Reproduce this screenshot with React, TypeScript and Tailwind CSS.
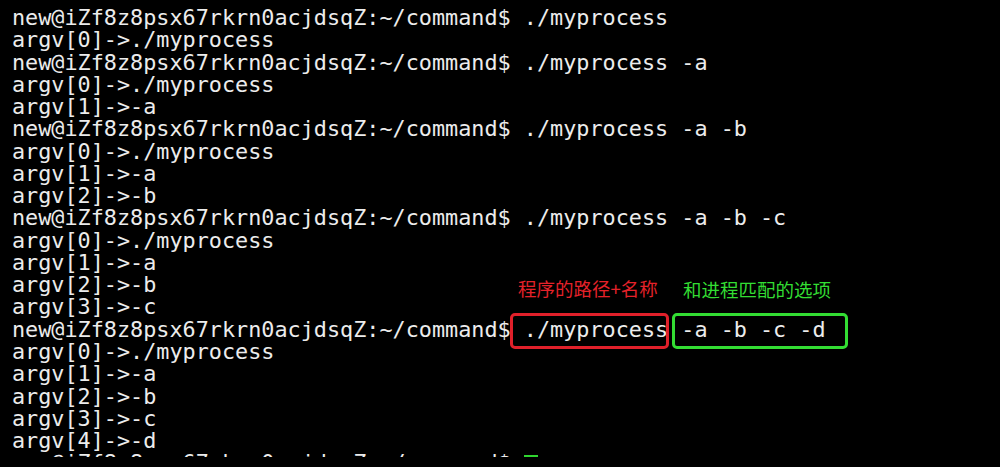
const prompt = 'new@iZf8z8psx67rkrn0acjdsqZ:~/command$ '

const lines: string[] = [
  prompt + './myprocess',
  'argv[0]->./myprocess',
  prompt + './myprocess -a',
  'argv[0]->./myprocess',
  'argv[1]->-a',
  prompt + './myprocess -a -b',
  'argv[0]->./myprocess',
  'argv[1]->-a',
  'argv[2]->-b',
  prompt + './myprocess -a -b -c',
  'argv[0]->./myprocess',
  'argv[1]->-a',
  'argv[2]->-b',
  'argv[3]->-c',
  prompt + './myprocess -a -b -c -d',
  'argv[0]->./myprocess',
  'argv[1]->-a',
  'argv[2]->-b',
  'argv[3]->-c',
  'argv[4]->-d',
]

const App: React.FC = () => {
  return (
    <div className="w-[1000px] h-[467px] bg-black overflow-hidden relative font-['DejaVu_Sans_Mono',monospace] text-[#ececec]">
      <div className="pl-[12px] pt-[7px] text-[21.8px] leading-[22.26px] whitespace-pre">
        {lines.map((l, i) => (
          <div key={i}>{l}</div>
        ))}
        <div className="h-[5px] overflow-hidden">
          <div className="flex items-start">
            <span>{prompt}</span>
            <span className="mt-[3px] w-[14px] h-[6px] bg-[#2fd52f]" />
          </div>
        </div>
      </div>

      {/* annotations */}
      <p className="absolute left-[518px] top-[277px] text-[18.5px] leading-[22px] text-[#e5222a] font-['Noto_Sans_CJK_SC',sans-serif]">
        程序的路径+名称
      </p>
      <p className="absolute left-[683px] top-[278px] text-[18.5px] leading-[22px] text-[#33dd33] font-['Noto_Sans_CJK_SC',sans-serif]">
        和进程匹配的选项
      </p>
      <div className="absolute left-[510px] top-[313px] w-[159px] h-[36px] border-[3px] border-[#e0202a] rounded-[5px]" />
      <div className="absolute left-[672px] top-[313px] w-[176px] h-[36px] border-[3px] border-[#33dd33] rounded-[5px]" />
    </div>
  )
}

export default App
